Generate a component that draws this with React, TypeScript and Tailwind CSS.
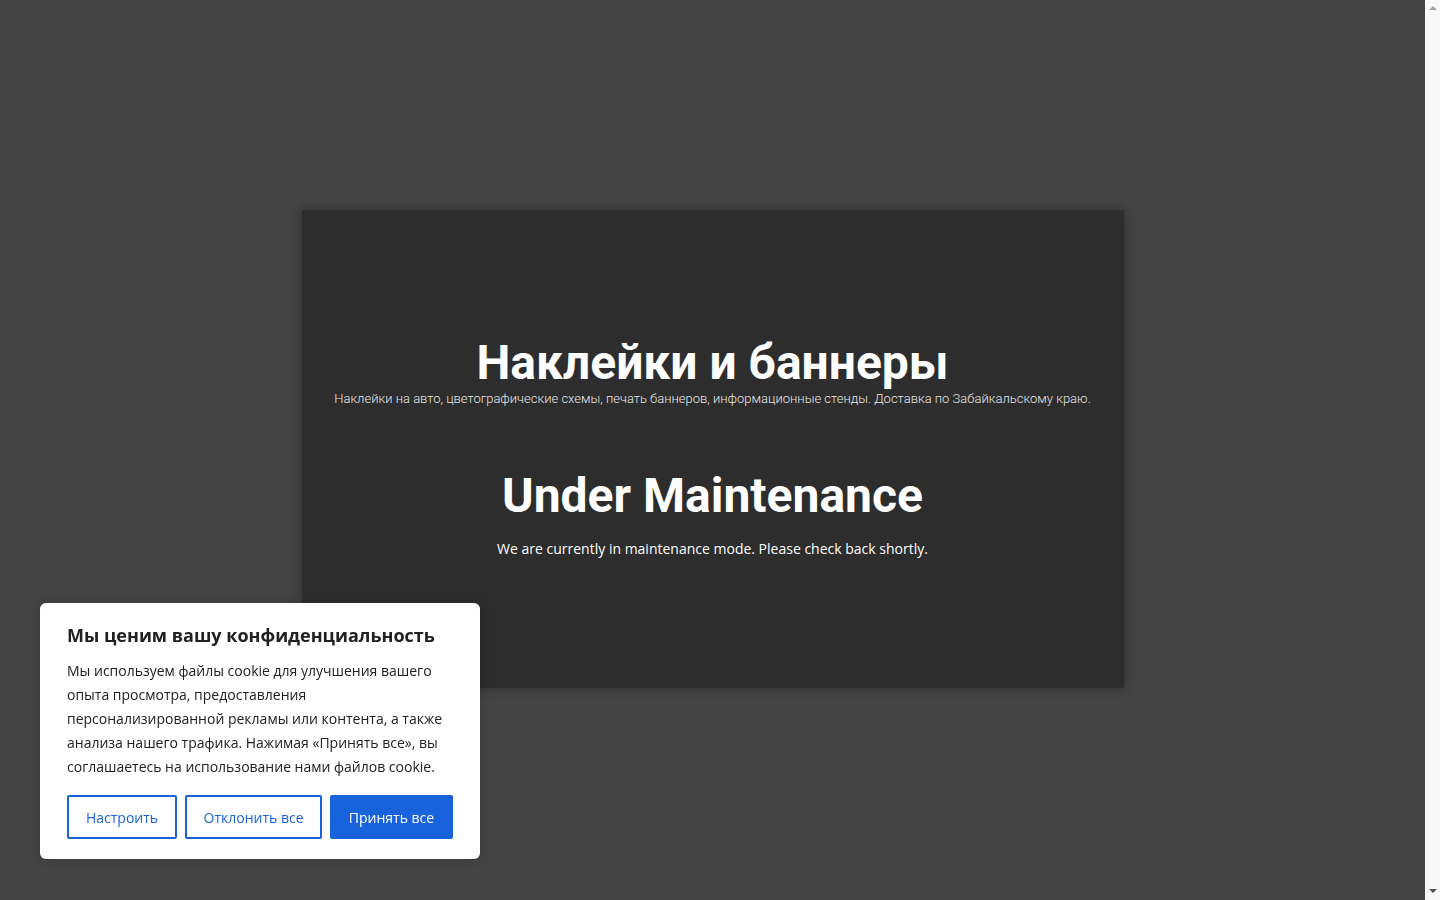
export default function App() {
  return (
    <div className="flex min-h-[900px] bg-[#444444]" style={{ fontFamily: "'Open Sans', sans-serif" }}>
      <div className="relative flex-1 pt-[210px]">
        {/* maintenance card */}
        <div className="mx-auto flex h-[478px] w-[822px] flex-col items-center justify-center bg-[#2d2d2d] pb-[4px] text-center text-white shadow-[0_0_10px_rgba(0,0,0,0.35)]">
          <h1 className="text-[48px] font-bold leading-[56px] text-white" style={{ fontFamily: "Roboto, sans-serif" }}>
            Наклейки и баннеры
          </h1>
          <p className="mt-[-1px] text-[13px] font-light leading-[18px] text-[#e6e6e6]" style={{ fontFamily: "Roboto, sans-serif" }}>
            Наклейки на авто, цветографические схемы, печать баннеров, информационные стенды. Доставка по Забайкальскому краю.
          </p>
          <h2 className="mt-[60px] text-[48px] font-bold leading-[56px] text-white" style={{ fontFamily: "Roboto, sans-serif" }}>
            Under Maintenance
          </h2>
          <p className="mt-[15px] text-[14px] leading-[20px] text-white">
            We are currently in maintenance mode. Please check back shortly.
          </p>
        </div>

        {/* cookie consent */}
        <div className="fixed bottom-[41px] left-[40px] w-[440px] rounded-[6px] bg-white px-[27px] pb-[20px] pt-[20px] text-[#212121] shadow-[0_0_12px_rgba(0,0,0,0.15)]">
          <h3 className="mt-[-1px] text-[18px] font-bold leading-[26px] text-[#212121]">Мы ценим вашу конфиденциальность</h3>
          <p className="mt-[11px] text-[14px] leading-[24px] text-[#212121]">
            Мы используем файлы cookie для улучшения вашего опыта просмотра, предоставления персонализированной рекламы или контента, а также анализа нашего трафика. Нажимая «Принять все», вы соглашаетесь на использование нами файлов cookie.
          </p>
          <div className="mt-[16px] flex gap-[8px]">
            <button className="h-[44px] w-[110px] rounded-[2px] border-2 border-[#1863dc] bg-white text-[14px] text-[#1863dc]">
              Настроить
            </button>
            <button className="h-[44px] w-[137px] rounded-[2px] border-2 border-[#1863dc] bg-white text-[14px] text-[#1863dc]">
              Отклонить все
            </button>
            <button className="h-[44px] w-[123px] rounded-[2px] border-2 border-[#1863dc] bg-[#1863dc] text-[14px] text-white">
              Принять все
            </button>
          </div>
        </div>
      </div>

      {/* scrollbar strip */}
      <div className="flex w-[15px] flex-col items-center justify-between bg-[#f8f8f8] pb-[7px] pt-[6px]">
        <div className="h-0 w-0 border-x-[4px] border-b-[4px] border-x-transparent border-b-[#a3a3a3]" />
        <div className="h-0 w-0 border-x-[4px] border-t-[4px] border-x-transparent border-t-[#505050]" />
      </div>
    </div>
  );
}
